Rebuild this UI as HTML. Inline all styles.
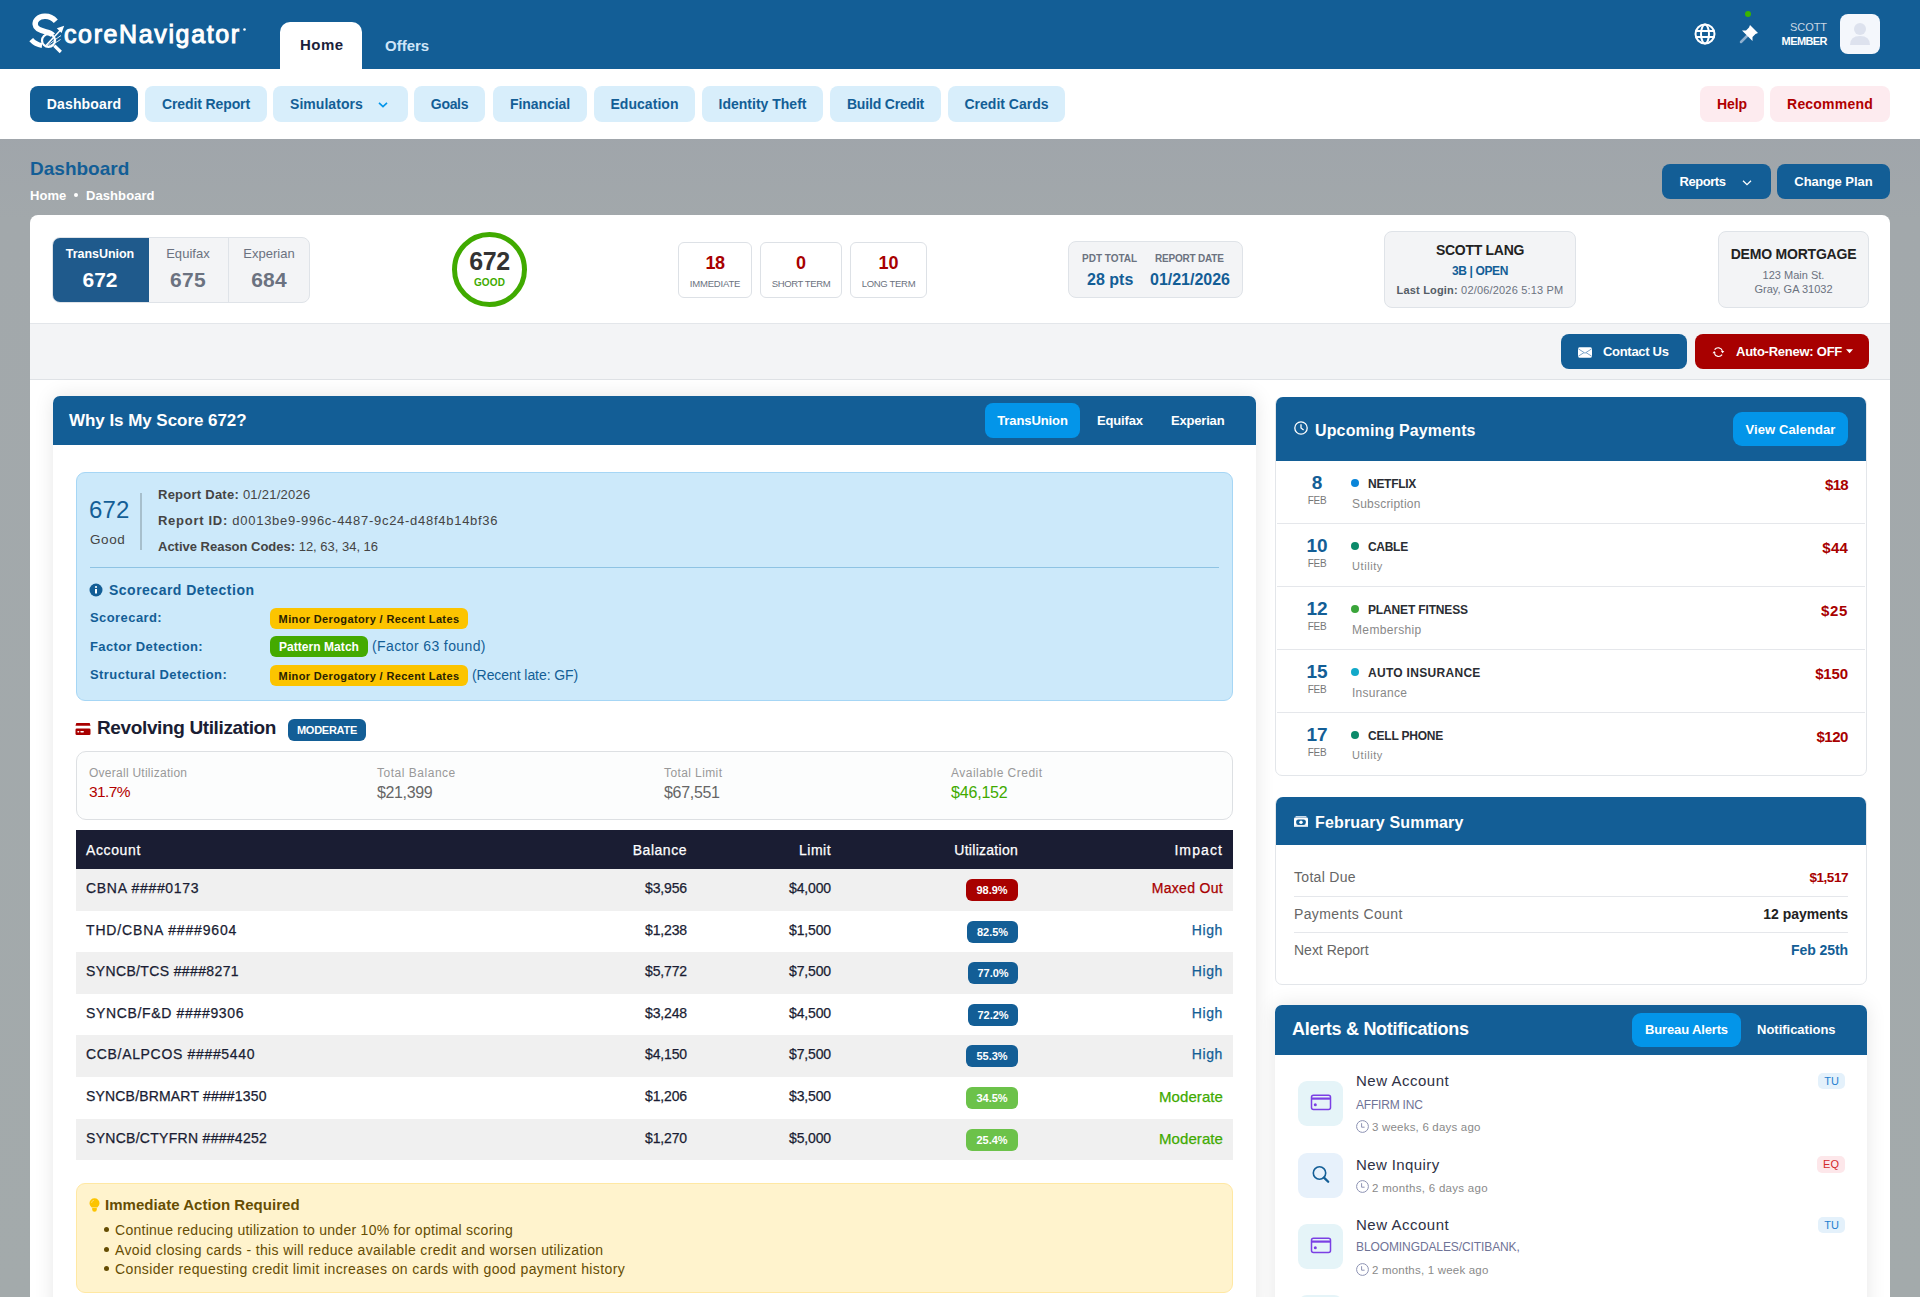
<!DOCTYPE html>
<html><head><meta charset="utf-8"><title>ScoreNavigator Dashboard</title>
<style>
*{box-sizing:border-box;margin:0;padding:0}
html,body{width:1920px;height:1297px;overflow:hidden}
body{position:relative;font-family:"Liberation Sans",sans-serif;background:linear-gradient(180deg,#9ca1aa 0px,#a2a8ab 220px,#a3aaab 1297px);color:#333}
.a{position:absolute}
.t{position:absolute;white-space:nowrap;line-height:1}
.blue{color:#135e96}
/* header */
#hdr{left:0;top:0;width:1920px;height:69px;background:#135e96}
#nav{left:0;top:69px;width:1920px;height:70px;background:#fff}
.nb{position:absolute;top:86px;height:36px;border-radius:8px;background:#d8eefb;color:#135e96;font-weight:700;font-size:14px;line-height:36px;text-align:center;letter-spacing:0.2px}
.nb.act{background:#135e96;color:#fff}
.nb.red{background:#fdebef;color:#b00000}
.bbtn{position:absolute;height:35px;border-radius:8px;background:#135e96;color:#fff;font-weight:700;font-size:13px;line-height:35px;text-align:center}

.sbox{position:absolute;border:1px solid #dfe3e8;border-radius:8px;background:#f3f4f6}
.stat{position:absolute;top:242px;height:56px;border:1px solid #dde1e6;border-radius:6px;background:#fff;text-align:center}
.stat .n{position:absolute;left:0;right:0;top:11px;font-size:18px;font-weight:700;color:#a80000;line-height:18px}
.stat .l{position:absolute;left:0;right:0;top:34.5px;font-size:9.5px;color:#6b7280;line-height:12px;letter-spacing:0.3px}

.ph{position:absolute;background:#135e96;border-radius:7px 7px 0 0}
.panel{position:absolute;background:#fff;box-shadow:0 0 20px rgba(0,0,0,.1)}
.lbl{position:absolute;white-space:nowrap;line-height:1;font-size:13px;font-weight:700;color:#135e96}
.badge{position:absolute;height:21px;border-radius:6px;font-size:11px;font-weight:700;line-height:22px;text-align:center;white-space:nowrap}
.yb{background:#fcc400;color:#2a2200}
.gb{background:#44aa00;color:#fff}

.tr{position:absolute;left:76px;width:1157px;height:41.6px}
.tr.g{background:#f0f0f0}
.td{position:absolute;white-space:nowrap;line-height:1;font-size:13px;color:#1a1d33;-webkit-text-stroke:0.25px currentColor}
.ub{position:absolute;height:22px;border-radius:6px;font-size:11px;font-weight:700;color:#fff;line-height:22px;text-align:center}

.pr{position:absolute;left:1276px;width:590px;height:63px;border-top:1px solid #e5e7eb}
.pd{position:absolute;width:30px;text-align:center;white-space:nowrap;line-height:1}
</style></head>
<body>
<!-- HEADER -->
<div id="hdr" class="a">
  <!-- logo -->
  <svg class="a" style="left:28px;top:8px" width="230" height="50" viewBox="28 8 230 50">
    <path d="M55.8 21.2 C52.3 17.3 48.3 16 44.6 16.2 C38.3 16.6 34.8 20.2 35.2 24.6 C35.6 29.3 41.3 30.8 46 31.8 C49.3 32.6 51.5 33.4 52.9 35.2" stroke="#fff" stroke-width="5.4" fill="none"/>
    <path d="M31.2 39.6 C34 42.8 37.4 44.8 42 45.4" stroke="#fff" stroke-width="5" fill="none"/>
    <circle cx="48.5" cy="40.5" r="6.5" stroke="#fff" stroke-width="2.2" fill="none"/>
    <path d="M54.3 45.6 L60.8 52" stroke="#fff" stroke-width="3.2"/>
    <path d="M46 45.5 L61.5 29" stroke="#fff" stroke-width="1.5"/>
    <path d="M64.2 25.8 L56.8 28.2 L61.6 33 Z" fill="#fff"/>
    <path d="M47 46 C52 42 56 39 61 35.5 M48 46.5 C53 44 57 42 60.5 39.5" stroke="#fff" stroke-width="0.9" fill="none"/>
    <text x="64" y="43" font-family="Liberation Sans" font-size="25" fill="#fff" stroke="#fff" stroke-width="1" letter-spacing="1.62">coreNavigator</text>
    <circle cx="244.5" cy="29.5" r="1.3" fill="#fff"/>
  </svg>
  <div class="a" style="left:280px;top:22px;width:82px;height:47px;background:#fff;border-radius:10px 10px 0 0"></div>
  <div class="t" style="left: 300px; top: 37px; font-size: 15px; font-weight: 700; color: rgb(27, 31, 59); letter-spacing: 0.5px;">Home</div>
  <div class="t" style="left: 385px; top: 38px; font-size: 15px; font-weight: 700; color: rgb(207, 229, 248); letter-spacing: 0px;">Offers</div>
  <!-- globe -->
  <svg class="a" style="left:1694px;top:23px" width="22" height="22" viewBox="0 0 22 22" fill="none" stroke="#fff" stroke-width="2">
    <circle cx="11" cy="11" r="9.5"></circle><ellipse cx="11" cy="11" rx="4" ry="9.5"></ellipse><path d="M1.5 8h19M1.5 14h19"></path>
  </svg>
  <!-- pin -->
  <svg class="a" style="left:1739px;top:24px" width="20" height="20" viewBox="0 0 20 20">
    <path d="M2 18 L8 12" stroke="#8fb0cf" stroke-width="2.5" stroke-linecap="round"></path>
    <path d="M11 1 L19 9 L16.5 10 L13.5 13 L13.5 17 L3 6.5 L7 6.5 L10 3.5 Z" fill="#fff"></path>
  </svg>
  <div class="a" style="left:1745px;top:11px;width:6px;height:6px;border-radius:50%;background:#3ab500"></div>
  <div class="t" style="right: 93px; top: 22px; font-size: 11px; color: rgb(201, 214, 227); text-align: right; letter-spacing: -0.07px;">SCOTT</div>
  <div class="t" style="right: 93px; top: 36px; font-size: 11px; font-weight: 700; color: rgb(255, 255, 255); text-align: right; letter-spacing: -0.58px;">MEMBER</div>
  <div class="a" style="left:1840px;top:14px;width:40px;height:40px;border-radius:8px;background:#f4f7fc">
    <svg width="40" height="40" viewBox="0 0 40 40"><circle cx="20" cy="15" r="6" fill="#dde2ee"></circle><path d="M10 31 Q10 22 20 22 Q30 22 30 31 Z" fill="#dde2ee"></path></svg>
  </div>
</div>

<!-- NAV -->
<div id="nav" class="a">
</div>
<div class="nb act" style="left: 30px; width: 108px; letter-spacing: 0.15px;">Dashboard</div>
<div class="nb" style="left: 145px; width: 122px; letter-spacing: -0.12px;">Credit Report</div>
<div class="nb" style="left:273px;width:135px;text-align:left;padding-left:17px;letter-spacing:0.05px">Simulators<svg class="a" style="left:104.5px;top:14.5px" width="10" height="8" viewBox="0 0 10 8"><path d="M1 1.8 L5 5.6 L9 1.8" stroke="#0095ea" stroke-width="1.6" fill="none"></path></svg></div>
<div class="nb" style="left: 414px; width: 71px; letter-spacing: -0.33px;">Goals</div>
<div class="nb" style="left: 493px; width: 94px; letter-spacing: -0.05px;">Financial</div>
<div class="nb" style="left: 594px; width: 101px; letter-spacing: 0.04px;">Education</div>
<div class="nb" style="left: 702px; width: 121px; letter-spacing: 0.01px;">Identity Theft</div>
<div class="nb" style="left: 830px; width: 111px; letter-spacing: -0.18px;">Build Credit</div>
<div class="nb" style="left: 948px; width: 117px; letter-spacing: 0px;">Credit Cards</div>
<div class="nb red" style="left: 1700px; width: 64px; letter-spacing: -0.11px;">Help</div>
<div class="nb red" style="left: 1770px; width: 120px; letter-spacing: 0.2px;">Recommend</div>

<!-- TITLE -->
<div class="t blue" style="left: 30px; top: 159px; font-size: 19px; font-weight: 700; letter-spacing: 0.01px;">Dashboard</div>
<div class="t" style="left: 30px; top: 189px; font-size: 13px; font-weight: 700; color: rgb(255, 255, 255); letter-spacing: 0.04px;">Home</div>
<div class="a" style="left:74px;top:193px;width:4px;height:4px;border-radius:50%;background:#fff"></div>
<div class="t" style="left: 86px; top: 189px; font-size: 13px; font-weight: 700; color: rgb(255, 255, 255); letter-spacing: 0.08px;">Dashboard</div>
<div class="bbtn" style="left:1662px;top:164px;width:109px;text-align:left;padding-left:17.5px;letter-spacing:-0.45px">Reports<svg class="a" style="left:79.5px;top:14.5px" width="10" height="8" viewBox="0 0 10 8"><path d="M1 1.8 L5 5.6 L9 1.8" stroke="#fff" stroke-width="1.3" fill="none"></path></svg></div>
<div class="bbtn" style="left: 1777px; top: 164px; width: 113px; letter-spacing: -0.03px;">Change Plan</div>

<!-- MAIN CARD -->
<div class="a" id="card" style="left:30px;top:215px;width:1860px;height:1200px;background:#fff;border-radius:8px"></div>


<!-- CARD TOP -->
<div class="a" style="left:52px;top:237px;width:258px;height:66px;border:1px solid #dfe3e8;border-radius:8px;background:#f3f4f6;overflow:hidden">
  <div class="a" style="left:-1px;top:-1px;width:97px;height:66px;background:#1f5a8c;border-radius:8px 0 0 8px"></div>
  <div class="a" style="left:175px;top:0;width:1px;height:64px;background:#dfe3e8"></div>
</div>
<div class="t" style="left: 52px; width: 96px; top: 247.5px; font-size: 12.5px; font-weight: 700; color: rgb(255, 255, 255); text-align: center; letter-spacing: -0.05px;">TransUnion</div>
<div class="t" style="left: 52px; width: 96px; top: 269px; font-size: 21px; font-weight: 700; color: rgb(255, 255, 255); text-align: center; letter-spacing: -0.02px;">672</div>
<div class="t" style="left: 148px; width: 80px; top: 247px; font-size: 13px; color: rgb(107, 114, 128); text-align: center; letter-spacing: 0.05px;">Equifax</div>
<div class="t" style="left: 148px; width: 80px; top: 269px; font-size: 21px; font-weight: 700; color: rgb(107, 114, 128); text-align: center; letter-spacing: 0.28px;">675</div>
<div class="t" style="left: 228px; width: 82px; top: 247px; font-size: 13px; color: rgb(107, 114, 128); text-align: center; letter-spacing: 0.04px;">Experian</div>
<div class="t" style="left: 228px; width: 82px; top: 269px; font-size: 21px; font-weight: 700; color: rgb(107, 114, 128); text-align: center; letter-spacing: 0.2px;">684</div>

<div class="a" style="left:452px;top:232px;width:75px;height:75px;border:5px solid #40aa00;border-radius:50%"></div>
<div class="t" style="left: 452px; width: 75px; top: 249px; font-size: 25px; font-weight: 700; color: rgb(51, 51, 51); text-align: center; letter-spacing: -0.36px;">672</div>
<div class="t" style="left: 452px; width: 75px; top: 278px; font-size: 10px; font-weight: 700; color: rgb(64, 170, 0); text-align: center; letter-spacing: 0.15px;">GOOD</div>

<div class="stat" style="left:678px;width:74px"><div class="n" style="letter-spacing: -0.6px;">18</div><div class="l" style="letter-spacing: -0.18px;">IMMEDIATE</div></div>
<div class="stat" style="left:760px;width:82px"><div class="n">0</div><div class="l" style="letter-spacing: -0.37px;">SHORT TERM</div></div>
<div class="stat" style="left:850px;width:77px"><div class="n">10</div><div class="l" style="letter-spacing: -0.31px;">LONG TERM</div></div>

<div class="sbox" style="left:1068px;top:241px;width:175px;height:57px"></div>
<div class="t" style="left: 1082px; top: 254px; font-size: 10px; font-weight: 700; color: rgb(107, 114, 128); letter-spacing: 0px;">PDT TOTAL</div>
<div class="t" style="left: 1155px; top: 254px; font-size: 10px; font-weight: 700; color: rgb(107, 114, 128); letter-spacing: -0.2px;">REPORT DATE</div>
<div class="t blue" style="left: 1087px; top: 272px; font-size: 16px; font-weight: 700; letter-spacing: 0.01px;">28 pts</div>
<div class="t blue" style="left: 1150px; top: 272px; font-size: 16px; font-weight: 700; letter-spacing: -0.01px;">01/21/2026</div>

<div class="sbox" style="left:1384px;top:231px;width:192px;height:77px"></div>
<div class="t" style="left: 1384px; width: 192px; top: 243px; font-size: 14px; font-weight: 700; color: rgb(34, 34, 34); text-align: center; letter-spacing: -0.28px;">SCOTT LANG</div>
<div class="t blue" style="left: 1384px; width: 192px; top: 265px; font-size: 12px; font-weight: 700; text-align: center; letter-spacing: -0.38px;">3B | OPEN</div>
<div class="t" style="left: 1384px; width: 192px; top: 285px; font-size: 11px; color: rgb(107, 114, 128); text-align: center; letter-spacing: 0.18px;"><b style="color:#555d66">Last Login:</b> 02/06/2026 5:13 PM</div>

<div class="sbox" style="left:1718px;top:231px;width:151px;height:77px"></div>
<div class="t" style="left: 1718px; width: 151px; top: 247px; font-size: 14px; font-weight: 700; color: rgb(34, 34, 34); text-align: center; letter-spacing: -0.2px;">DEMO MORTGAGE</div>
<div class="t" style="left:1718px;width:151px;top:268px;font-size:11px;color:#6b7280;text-align:center;line-height:14px">123 Main St.<br>Gray, GA 31032</div>

<!-- STRIP -->
<div class="a" style="left:30px;top:323px;width:1860px;height:57px;background:#f3f4f6;border-top:1px solid #e3e6ea;border-bottom:1px solid #dfe2e6"></div>
<div class="bbtn" style="left:1561px;top:334px;width:126px;height:35px;font-size:13px;text-align:left;padding-left:42px;letter-spacing:-0.3px">Contact Us
  <svg class="a" style="left:16.5px;top:13px" width="14" height="11" viewBox="0 0 14 11"><rect x="0" y="0.3" width="14" height="10.4" rx="1.6" fill="#fff"/><path d="M0.3 1.8 L7 6.2 L13.7 1.8 M0.3 9.2 L6 5.6 M13.7 9.2 L8 5.6" stroke="#6f9cc4" stroke-width="0.9" fill="none"/></svg>
</div>
<div class="bbtn" style="left:1695px;top:334px;width:174px;height:35px;font-size:13px;background:#a80000;text-align:left;padding-left:41px;letter-spacing:-0.25px">Auto-Renew: OFF
  <svg class="a" style="left:17px;top:13px" width="13" height="11" viewBox="0 0 13 11" fill="none" stroke="#fff" stroke-width="1.2"><path d="M2.6 2.6 A4.4 4.4 0 0 1 10.4 3.9"/><path d="M10.1 7.6 A4.4 4.4 0 0 1 2.3 6.4"/><path d="M8.9 4.1 H12.3 L10.6 6.3 Z" fill="#fff" stroke="none"/><path d="M0.5 6.2 H3.9 L2.2 4 Z" fill="#fff" stroke="none"/></svg>
  <svg class="a" style="left:151px;top:15px" width="7" height="5" viewBox="0 0 8 5"><path d="M0 0 L8 0 L4 4.5 Z" fill="#fff"></path></svg>
</div>


<!-- LEFT PANEL -->
<div class="panel" style="left:53px;top:396px;width:1203px;height:920px;border-radius:7px"></div>
<div class="ph" style="left:53px;top:396px;width:1203px;height:49px"></div>
<div class="t" style="left: 69px; top: 412px; font-size: 17px; font-weight: 700; color: rgb(255, 255, 255); letter-spacing: -0.05px;">Why Is My Score 672?</div>
<div class="a" style="left:985px;top:403px;width:95px;height:35px;border-radius:8px;background:#0395e9"></div>
<div class="t" style="left: 985px; width: 95px; top: 414px; font-size: 13px; font-weight: 700; color: rgb(255, 255, 255); text-align: center; letter-spacing: -0.1px;">TransUnion</div>
<div class="t" style="left: 1097px; top: 414px; font-size: 13px; font-weight: 700; color: rgb(255, 255, 255); letter-spacing: -0.16px;">Equifax</div>
<div class="t" style="left: 1171px; top: 414px; font-size: 13px; font-weight: 700; color: rgb(255, 255, 255); letter-spacing: -0.19px;">Experian</div>

<div class="a" style="left:76px;top:472px;width:1157px;height:229px;background:#cce9fa;border:1px solid #a6d6f5;border-radius:9px"></div>
<div class="t blue" style="left: 89px; top: 498px; font-size: 24px; letter-spacing: 0.13px;">672</div>
<div class="t" style="left: 90px; top: 533px; font-size: 13.5px; color: rgb(68, 68, 68); letter-spacing: 0.6px;">Good</div>
<div class="a" style="left:140px;top:493px;width:2px;height:57px;background:#a7bfcc"></div>
<div class="t" style="left: 158px; top: 488px; font-size: 13px; color: rgb(68, 68, 68); letter-spacing: 0.25px;"><b>Report Date:</b> 01/21/2026</div>
<div class="t" style="left: 158px; top: 514px; font-size: 13px; color: rgb(68, 68, 68); letter-spacing: 0.72px;"><b>Report ID:</b> d0013be9-996c-4487-9c24-d48f4b14bf36</div>
<div class="t" style="left: 158px; top: 540px; font-size: 13px; color: rgb(68, 68, 68); letter-spacing: -0.01px;"><b>Active Reason Codes:</b> 12, 63, 34, 16</div>
<div class="a" style="left:90px;top:567px;width:1129px;height:1px;background:#8ec3e3"></div>
<svg class="a" style="left:89px;top:583px" width="14" height="14" viewBox="0 0 14 14"><circle cx="7" cy="7" r="6.5" fill="#135e96"></circle><rect x="6" y="6" width="2" height="4.5" fill="#fff"></rect><circle cx="7" cy="4" r="1.1" fill="#fff"></circle></svg>
<div class="t blue" style="left: 109px; top: 583px; font-size: 14px; font-weight: 700; letter-spacing: 0.49px;">Scorecard Detection</div>
<div class="lbl" style="left: 90px; top: 611px; letter-spacing: 0.42px;">Scorecard:</div>
<div class="lbl" style="left: 90px; top: 640px; letter-spacing: 0.36px;">Factor Detection:</div>
<div class="lbl" style="left: 90px; top: 668px; letter-spacing: 0.41px;">Structural Detection:</div>
<div class="badge yb" style="left: 270px; top: 608px; width: 198px; letter-spacing: 0.37px;">Minor Derogatory / Recent Lates</div>
<div class="badge gb" style="left: 270px; top: 636px; width: 98px; letter-spacing: 0.05px; font-size: 12px;">Pattern Match</div>
<div class="t blue" style="left: 372px; top: 639px; font-size: 14px; letter-spacing: 0.38px;">(Factor 63 found)</div>
<div class="badge yb" style="left: 270px; top: 665px; width: 198px; letter-spacing: 0.37px;">Minor Derogatory / Recent Lates</div>
<div class="t blue" style="left: 472px; top: 668px; font-size: 14px; letter-spacing: -0.07px;">(Recent late: GF)</div>

<!-- Revolving -->
<svg class="a" style="left:75px;top:723px" width="16" height="12" viewBox="0 0 16 12"><path d="M1.3 0 H14.7 L15.5 2.8 H0.5 Z" fill="#a80000"/><rect x="0.5" y="5.6" width="15" height="6.4" rx="1.2" fill="#a80000"/><rect x="2.3" y="7.9" width="2" height="1.6" rx="0.7" fill="#fff"/><rect x="5.3" y="7.9" width="3.6" height="1.6" rx="0.7" fill="#fff"/></svg>
<div class="t" style="left: 97px; top: 718px; font-size: 19px; font-weight: 700; color: rgb(26, 29, 51); letter-spacing: -0.37px;">Revolving Utilization</div>
<div class="badge" style="left: 288px; top: 719px; width: 78px; height: 22px; line-height: 22px; background: rgb(19, 94, 150); color: rgb(255, 255, 255); border-radius: 6px; letter-spacing: -0.26px;">MODERATE</div>
<div class="a" style="left:76px;top:751px;width:1157px;height:69px;border:1px solid #dde0e3;border-radius:10px;background:#fcfdfd"></div>
<div class="t" style="left: 89px; top: 767px; font-size: 12px; color: rgb(153, 153, 153); letter-spacing: 0.26px;">Overall Utilization</div>
<div class="t" style="left: 89px; top: 784px; font-size: 15.5px; color: rgb(179, 0, 0); letter-spacing: -0.6px;">31.7%</div>
<div class="t" style="left: 377px; top: 767px; font-size: 12px; color: rgb(153, 153, 153); letter-spacing: 0.52px;">Total Balance</div>
<div class="t" style="left: 377px; top: 785px; font-size: 16px; color: rgb(102, 102, 102); letter-spacing: -0.37px;">$21,399</div>
<div class="t" style="left: 664px; top: 767px; font-size: 12px; color: rgb(153, 153, 153); letter-spacing: 0.4px;">Total Limit</div>
<div class="t" style="left: 664px; top: 785px; font-size: 16px; color: rgb(102, 102, 102); letter-spacing: -0.31px;">$67,551</div>
<div class="t" style="left: 951px; top: 767px; font-size: 12px; color: rgb(153, 153, 153); letter-spacing: 0.48px;">Available Credit</div>
<div class="t" style="left: 951px; top: 785px; font-size: 16px; color: rgb(64, 170, 0); letter-spacing: -0.19px;">$46,152</div>


<!-- TABLE -->
<div class="a" style="left:76px;top:830px;width:1157px;height:39px;background:#1a1d33"></div>
<div class="td" style="left: 86px; top: 843px; color: rgb(255, 255, 255); letter-spacing: 0.62px; font-size: 14px;">Account</div>
<div class="td" style="right: 1233px; top: 843px; color: rgb(255, 255, 255); letter-spacing: 0.52px; font-size: 14px;">Balance</div>
<div class="td" style="right: 1089px; top: 843px; color: rgb(255, 255, 255); letter-spacing: 0.47px; font-size: 14px;">Limit</div>
<div class="td" style="right: 902px; top: 843px; color: rgb(255, 255, 255); letter-spacing: 0.27px; font-size: 14px;">Utilization</div>
<div class="td" style="right: 697px; top: 843px; color: rgb(255, 255, 255); letter-spacing: 1.1px; font-size: 14px;">Impact</div>
<div class="tr g" style="top:869.0px"></div>
<div class="td" style="left: 86px; top: 881.0px; letter-spacing: 0.69px; font-size: 14px;">CBNA ####0173</div><div class="td" style="right:1233px;top:881.0px;font-size:14px;letter-spacing:-0.15px">$3,956</div><div class="td" style="right:1089px;top:881.0px;font-size:14px;letter-spacing:-0.15px">$4,000</div><div class="ub" style="left:966px;width:52px;top:879.0px;background:#a80000">98.9%</div><div class="td" style="right: 697px; top: 881.0px; color: rgb(168, 0, 0); font-size: 14px; letter-spacing: 0.31px;">Maxed Out</div>
<div class="tr" style="top:910.6px"></div>
<div class="td" style="left: 86px; top: 922.6px; letter-spacing: 0.84px; font-size: 14px;">THD/CBNA ####9604</div><div class="td" style="right:1233px;top:922.6px;font-size:14px;letter-spacing:-0.15px">$1,238</div><div class="td" style="right:1089px;top:922.6px;font-size:14px;letter-spacing:-0.15px">$1,500</div><div class="ub" style="left:967px;width:51px;top:920.6px;background:#135e96">82.5%</div><div class="td" style="right: 697px; top: 922.6px; color: rgb(19, 94, 150); font-size: 14px; letter-spacing: 0.63px;">High</div>
<div class="tr g" style="top:952.2px"></div>
<div class="td" style="left: 86px; top: 964.2px; letter-spacing: 0.37px; font-size: 14px;">SYNCB/TCS ####8271</div><div class="td" style="right:1233px;top:964.2px;font-size:14px;letter-spacing:-0.15px">$5,772</div><div class="td" style="right:1089px;top:964.2px;font-size:14px;letter-spacing:-0.15px">$7,500</div><div class="ub" style="left:968px;width:50px;top:962.2px;background:#135e96">77.0%</div><div class="td" style="right: 697px; top: 964.2px; color: rgb(19, 94, 150); font-size: 14px; letter-spacing: 0.63px;">High</div>
<div class="tr" style="top:993.8px"></div>
<div class="td" style="left: 86px; top: 1005.8px; letter-spacing: 0.66px; font-size: 14px;">SYNCB/F&amp;D ####9306</div><div class="td" style="right:1233px;top:1005.8px;font-size:14px;letter-spacing:-0.15px">$3,248</div><div class="td" style="right:1089px;top:1005.8px;font-size:14px;letter-spacing:-0.15px">$4,500</div><div class="ub" style="left:968px;width:50px;top:1003.8px;background:#135e96">72.2%</div><div class="td" style="right: 697px; top: 1005.8px; color: rgb(19, 94, 150); font-size: 14px; letter-spacing: 0.63px;">High</div>
<div class="tr g" style="top:1035.4px"></div>
<div class="td" style="left: 86px; top: 1047.4px; letter-spacing: 0.67px; font-size: 14px;">CCB/ALPCOS ####5440</div><div class="td" style="right:1233px;top:1047.4px;font-size:14px;letter-spacing:-0.15px">$4,150</div><div class="td" style="right:1089px;top:1047.4px;font-size:14px;letter-spacing:-0.15px">$7,500</div><div class="ub" style="left:966px;width:52px;top:1045.4px;background:#135e96">55.3%</div><div class="td" style="right: 697px; top: 1047.4px; color: rgb(19, 94, 150); font-size: 14px; letter-spacing: 0.63px;">High</div>
<div class="tr" style="top:1077.0px"></div>
<div class="td" style="left: 86px; top: 1089.0px; letter-spacing: 0.18px; font-size: 14px;">SYNCB/BRMART ####1350</div><div class="td" style="right:1233px;top:1089.0px;font-size:14px;letter-spacing:-0.15px">$1,206</div><div class="td" style="right:1089px;top:1089.0px;font-size:14px;letter-spacing:-0.15px">$3,500</div><div class="ub" style="left:966px;width:52px;top:1087.0px;background:#6cc24a">34.5%</div><div class="td" style="right: 697px; top: 1089.0px; color: rgb(64, 170, 0); font-size: 15px; letter-spacing: 0.08px;">Moderate</div>
<div class="tr g" style="top:1118.6px"></div>
<div class="td" style="left: 86px; top: 1130.6px; letter-spacing: 0.29px; font-size: 14px;">SYNCB/CTYFRN ####4252</div><div class="td" style="right:1233px;top:1130.6px;font-size:14px;letter-spacing:-0.15px">$1,270</div><div class="td" style="right:1089px;top:1130.6px;font-size:14px;letter-spacing:-0.15px">$5,000</div><div class="ub" style="left:966px;width:52px;top:1128.6px;background:#6cc24a">25.4%</div><div class="td" style="right: 697px; top: 1130.6px; color: rgb(64, 170, 0); font-size: 15px; letter-spacing: 0.08px;">Moderate</div>

<!-- ACTION -->
<div class="a" style="left:76px;top:1183px;width:1157px;height:110px;background:#fff3cd;border:1px solid #ffe8a3;border-radius:9px"></div>
<svg class="a" style="left:88.5px;top:1198px" width="11" height="14" viewBox="0 0 11 14"><path d="M5.5 0.3 A5 5 0 0 1 10.5 5.3 C10.5 7.2 9.2 8.3 8.3 9.6 L2.7 9.6 C1.8 8.3 0.5 7.2 0.5 5.3 A5 5 0 0 1 5.5 0.3 Z" fill="#fcc400"/><path d="M3.2 10.1 H7.8 V11.4 A2.3 2.3 0 0 1 3.2 11.4 Z" fill="#fcc400"/><path d="M2.5 5 A3 3 0 0 1 5 2.2" stroke="#ffe38a" stroke-width="0.7" fill="none"/></svg>
<div class="t" style="left: 105px; top: 1197px; font-size: 15px; font-weight: 700; color: rgb(102, 77, 3); letter-spacing: 0.04px;">Immediate Action Required</div>
<div class="t" style="left: 115px; top: 1223px; font-size: 14px; color: rgb(102, 77, 3); letter-spacing: 0.27px;">Continue reducing utilization to under 10% for optimal scoring</div>
<div class="t" style="left: 115px; top: 1243px; font-size: 14px; color: rgb(102, 77, 3); letter-spacing: 0.36px;">Avoid closing cards - this will reduce available credit and worsen utilization</div>
<div class="t" style="left: 115px; top: 1262px; font-size: 14px; color: rgb(102, 77, 3); letter-spacing: 0.39px;">Consider requesting credit limit increases on cards with good payment history</div>
<div class="a" style="left:104px;top:1227px;width:5px;height:5px;border-radius:50%;background:#664d03"></div>
<div class="a" style="left:104px;top:1247px;width:5px;height:5px;border-radius:50%;background:#664d03"></div>
<div class="a" style="left:104px;top:1266px;width:5px;height:5px;border-radius:50%;background:#664d03"></div>


<!-- UPCOMING -->
<div class="panel" style="box-shadow:none;left:1275px;top:397px;width:592px;height:379px;border-radius:7px;border:1px solid #e3e6ea"></div>
<div class="ph" style="left:1276px;top:397px;width:590px;height:64px"></div>
<svg class="a" style="left:1294px;top:421px" width="14" height="14" viewBox="0 0 14 14" fill="none" stroke="#fff" stroke-width="1.3"><circle cx="7" cy="7" r="6.2"></circle><path d="M7 3.2 L7 7 L9.6 9"></path></svg>
<div class="t" style="left: 1315px; top: 423px; font-size: 16px; font-weight: 700; color: rgb(255, 255, 255); letter-spacing: 0.14px;">Upcoming Payments</div>
<div class="a" style="left:1733px;top:412px;width:115px;height:34px;border-radius:9px;background:#0395e9"></div>
<div class="t" style="left: 1733px; width: 115px; top: 423px; font-size: 13px; font-weight: 700; color: rgb(255, 255, 255); text-align: center; letter-spacing: 0.11px;">View Calendar</div>
<div class="pd" style="left:1302px;top:473px;font-size:19px;font-weight:700;color:#135e96">8</div><div class="pd" style="left: 1302px; top: 496px; font-size: 10px; color: rgb(119, 119, 119); letter-spacing: -0.35px;">FEB</div><div class="a" style="left:1351px;top:479px;width:8px;height:8px;border-radius:50%;background:#0a85d9"></div><div class="t" style="left: 1368px; top: 478px; font-size: 12px; font-weight: 700; color: rgb(42, 45, 51); letter-spacing: -0.28px;">NETFLIX</div><div class="t" style="left: 1352px; top: 498px; font-size: 12px; color: rgb(136, 136, 136); letter-spacing: 0.21px;">Subscription</div><div class="t" style="right: 72px; top: 477px; font-size: 15px; font-weight: 700; color: rgb(168, 0, 0); letter-spacing: -0.67px;">$18</div>
<div class="a" style="left:1277px;top:523px;width:588px;height:1px;background:#e5e7eb"></div>
<div class="pd" style="left:1302px;top:536px;font-size:19px;font-weight:700;color:#135e96">10</div><div class="pd" style="left: 1302px; top: 559px; font-size: 10px; color: rgb(119, 119, 119); letter-spacing: -0.35px;">FEB</div><div class="a" style="left:1351px;top:542px;width:8px;height:8px;border-radius:50%;background:#0b8a6a"></div><div class="t" style="left: 1368px; top: 541px; font-size: 12px; font-weight: 700; color: rgb(42, 45, 51); letter-spacing: -0.3px;">CABLE</div><div class="t" style="left: 1352px; top: 561px; font-size: 11px; color: rgb(136, 136, 136); letter-spacing: 0.57px;">Utility</div><div class="t" style="right: 72px; top: 540px; font-size: 15px; font-weight: 700; color: rgb(168, 0, 0); letter-spacing: 0.2px;">$44</div>
<div class="a" style="left:1277px;top:586px;width:588px;height:1px;background:#e5e7eb"></div>
<div class="pd" style="left:1302px;top:599px;font-size:19px;font-weight:700;color:#135e96">12</div><div class="pd" style="left: 1302px; top: 622px; font-size: 10px; color: rgb(119, 119, 119); letter-spacing: -0.35px;">FEB</div><div class="a" style="left:1351px;top:605px;width:8px;height:8px;border-radius:50%;background:#3aa53a"></div><div class="t" style="left: 1368px; top: 604px; font-size: 12px; font-weight: 700; color: rgb(42, 45, 51); letter-spacing: -0.15px;">PLANET FITNESS</div><div class="t" style="left: 1352px; top: 624px; font-size: 12px; color: rgb(136, 136, 136); letter-spacing: 0.36px;">Membership</div><div class="t" style="right: 72px; top: 603px; font-size: 15px; font-weight: 700; color: rgb(168, 0, 0); letter-spacing: 0.68px;">$25</div>
<div class="a" style="left:1277px;top:649px;width:588px;height:1px;background:#e5e7eb"></div>
<div class="pd" style="left:1302px;top:662px;font-size:19px;font-weight:700;color:#135e96">15</div><div class="pd" style="left: 1302px; top: 685px; font-size: 10px; color: rgb(119, 119, 119); letter-spacing: -0.35px;">FEB</div><div class="a" style="left:1351px;top:668px;width:8px;height:8px;border-radius:50%;background:#12a9c9"></div><div class="t" style="left: 1368px; top: 667px; font-size: 12px; font-weight: 700; color: rgb(42, 45, 51); letter-spacing: 0.3px;">AUTO INSURANCE</div><div class="t" style="left: 1352px; top: 687px; font-size: 12px; color: rgb(136, 136, 136); letter-spacing: 0.28px;">Insurance</div><div class="t" style="right: 72px; top: 666px; font-size: 15px; font-weight: 700; color: rgb(168, 0, 0); letter-spacing: -0.13px;">$150</div>
<div class="a" style="left:1277px;top:712px;width:588px;height:1px;background:#e5e7eb"></div>
<div class="pd" style="left:1302px;top:725px;font-size:19px;font-weight:700;color:#135e96">17</div><div class="pd" style="left: 1302px; top: 748px; font-size: 10px; color: rgb(119, 119, 119); letter-spacing: -0.35px;">FEB</div><div class="a" style="left:1351px;top:731px;width:8px;height:8px;border-radius:50%;background:#0b8a6a"></div><div class="t" style="left: 1368px; top: 730px; font-size: 12px; font-weight: 700; color: rgb(42, 45, 51); letter-spacing: -0.2px;">CELL PHONE</div><div class="t" style="left: 1352px; top: 750px; font-size: 11px; color: rgb(136, 136, 136); letter-spacing: 0.57px;">Utility</div><div class="t" style="right: 72px; top: 729px; font-size: 15px; font-weight: 700; color: rgb(168, 0, 0); letter-spacing: -0.46px;">$120</div>

<!-- SUMMARY -->
<div class="panel" style="box-shadow:none;left:1275px;top:797px;width:592px;height:188px;border-radius:7px;border:1px solid #e3e6ea"></div>
<div class="ph" style="left:1276px;top:797px;width:590px;height:48px"></div>
<svg class="a" style="left:1294px;top:816px" width="14" height="11" viewBox="0 0 14 11"><rect x="1.6" y="0" width="10.8" height="1.3" fill="#c9d9e8"/><rect x="0" y="1.6" width="14" height="9.4" rx="1.2" fill="#fff"/><rect x="0" y="9.6" width="14" height="1.4" fill="#c9d9e8"/><rect x="2.2" y="3.4" width="9.6" height="5.6" rx="2.2" fill="#135e96"/><circle cx="7" cy="6.2" r="1.7" fill="#fff"/></svg>
<div class="t" style="left: 1315px; top: 815px; font-size: 16px; font-weight: 700; color: rgb(255, 255, 255); letter-spacing: 0.17px;">February Summary</div>
<div class="t" style="left: 1294px; top: 870px; font-size: 14px; color: rgb(102, 102, 102); letter-spacing: 0.31px;">Total Due</div>
<div class="t" style="right: 72px; top: 870.5px; font-size: 13.5px; font-weight: 700; color: rgb(168, 0, 0); letter-spacing: -0.45px;">$1,517</div>
<div class="a" style="left:1294px;top:896px;width:554px;height:1px;background:#e5e7eb"></div>
<div class="t" style="left: 1294px; top: 907px; font-size: 14px; color: rgb(102, 102, 102); letter-spacing: 0.37px;">Payments Count</div>
<div class="t" style="right: 72px; top: 907px; font-size: 14px; font-weight: 700; color: rgb(34, 34, 34); letter-spacing: -0.01px;">12 payments</div>
<div class="a" style="left:1294px;top:932px;width:554px;height:1px;background:#e5e7eb"></div>
<div class="t" style="left: 1294px; top: 943px; font-size: 14px; color: rgb(102, 102, 102); letter-spacing: -0.01px;">Next Report</div>
<div class="t blue" style="right: 72px; top: 943px; font-size: 14px; font-weight: 700; letter-spacing: -0.08px;">Feb 25th</div>

<!-- ALERTS -->
<div class="panel" style="left:1275px;top:1005px;width:592px;height:400px;border-radius:7px"></div>
<div class="ph" style="left:1275px;top:1005px;width:592px;height:50px"></div>
<div class="t" style="left: 1292px; top: 1020px; font-size: 18px; font-weight: 700; color: rgb(255, 255, 255); letter-spacing: -0.29px;">Alerts &amp; Notifications</div>
<div class="a" style="left:1632px;top:1013px;width:109px;height:34px;border-radius:9px;background:#0395e9"></div>
<div class="t" style="left: 1632px; width: 109px; top: 1023px; font-size: 13px; font-weight: 700; color: rgb(255, 255, 255); text-align: center; letter-spacing: -0.15px;">Bureau Alerts</div>
<div class="t" style="left: 1757px; top: 1023px; font-size: 13px; font-weight: 700; color: rgb(255, 255, 255); letter-spacing: -0.01px;">Notifications</div>
<div class="a" style="left:1298px;top:1081px;width:45px;height:45px;border-radius:9px;background:#e5f4f8"></div>
<svg class="a" style="left:1310px;top:1094px" width="22" height="17" viewBox="0 0 22 17" fill="none" stroke="#7b3fe4" stroke-width="1.5"><rect x="1.5" y="1.2" width="19" height="14.3" rx="2"></rect><path d="M1.5 4.6 H20.5" stroke-width="2.2"></path><circle cx="5.3" cy="10.8" r="1.5" fill="#7b3fe4" stroke="none"></circle></svg>
<div class="t" style="left: 1356px; top: 1073px; font-size: 15px; color: rgb(46, 49, 69); letter-spacing: 0.52px;">New Account</div>
<div class="t" style="left:1356px;top:1099.0px;font-size:12px;color:#6f7396;letter-spacing:-0.2px">AFFIRM INC</div>
<svg class="a" style="left:1356px;top:1120px" width="13" height="13" viewBox="0 0 13 13" fill="none" stroke="#8d92b3" stroke-width="1"><circle cx="6.5" cy="6.5" r="5.9"></circle><path d="M5.6 3.2 V7.2 H8.6"></path></svg>
<div class="t" style="left:1372px;top:1121.5px;font-size:11.5px;color:#8a8a8a;letter-spacing:0.2px">3 weeks, 6 days ago</div>
<div class="a" style="left:1818px;top:1073px;width:27px;height:16px;border-radius:5px;background:#e4f1fb;color:#1e7fd0;font-size:11px;line-height:16px;text-align:center">TU</div>
<div class="a" style="left:1298px;top:1153px;width:45px;height:45px;border-radius:9px;background:#e7f1fb"></div>
<svg class="a" style="left:1310px;top:1164px" width="22" height="22" viewBox="0 0 22 22" fill="none" stroke="#135e96" stroke-width="1.6"><circle cx="9.5" cy="9" r="6.2"></circle><path d="M14 13.6 L18.2 17.8" stroke-width="2.3" stroke-linecap="round"></path></svg>
<div class="t" style="left: 1356px; top: 1157px; font-size: 15px; color: rgb(46, 49, 69); letter-spacing: 0.4px;">New Inquiry</div>
<svg class="a" style="left:1356px;top:1180px" width="13" height="13" viewBox="0 0 13 13" fill="none" stroke="#8d92b3" stroke-width="1"><circle cx="6.5" cy="6.5" r="5.9"></circle><path d="M5.6 3.2 V7.2 H8.6"></path></svg>
<div class="t" style="left:1372px;top:1182.9px;font-size:11.5px;color:#8a8a8a;letter-spacing:0.3px">2 months, 6 days ago</div>
<div class="a" style="left:1817px;top:1156px;width:28px;height:17px;border-radius:5px;background:#fde7ea;color:#d32a2a;font-size:11px;line-height:17px;text-align:center">EQ</div>
<div class="a" style="left:1298px;top:1224px;width:45px;height:45px;border-radius:9px;background:#e5f4f8"></div>
<svg class="a" style="left:1310px;top:1237px" width="22" height="17" viewBox="0 0 22 17" fill="none" stroke="#7b3fe4" stroke-width="1.5"><rect x="1.5" y="1.2" width="19" height="14.3" rx="2"></rect><path d="M1.5 4.6 H20.5" stroke-width="2.2"></path><circle cx="5.3" cy="10.8" r="1.5" fill="#7b3fe4" stroke="none"></circle></svg>
<div class="t" style="left: 1356px; top: 1216.5px; font-size: 15px; color: rgb(46, 49, 69); letter-spacing: 0.52px;">New Account</div>
<div class="t" style="left:1356px;top:1241.4px;font-size:12px;color:#6f7396;letter-spacing:-0.1px">BLOOMINGDALES/CITIBANK,</div>
<svg class="a" style="left:1356px;top:1263px" width="13" height="13" viewBox="0 0 13 13" fill="none" stroke="#8d92b3" stroke-width="1"><circle cx="6.5" cy="6.5" r="5.9"></circle><path d="M5.6 3.2 V7.2 H8.6"></path></svg>
<div class="t" style="left:1372px;top:1264.7px;font-size:11.5px;color:#8a8a8a;letter-spacing:0.2px">2 months, 1 week ago</div>
<div class="a" style="left:1818px;top:1217px;width:27px;height:16px;border-radius:5px;background:#e4f1fb;color:#1e7fd0;font-size:11px;line-height:16px;text-align:center">TU</div>
<div class="a" style="left:1298px;top:1295px;width:45px;height:45px;border-radius:9px;background:#e5f4f8"></div>


</body></html>
